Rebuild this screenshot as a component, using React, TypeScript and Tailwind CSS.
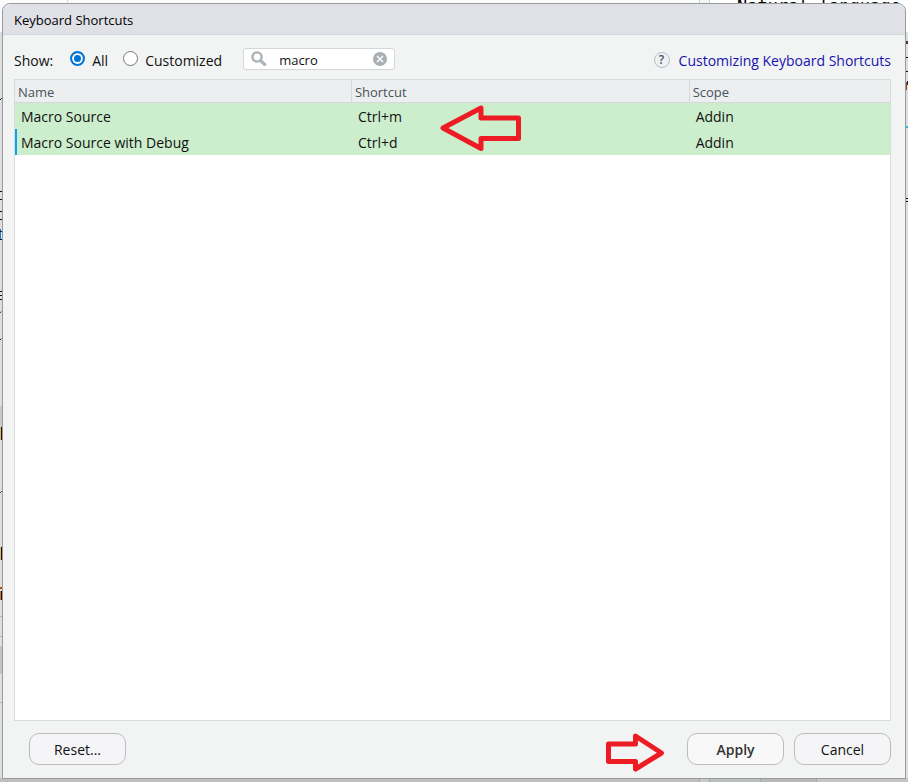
import { useState } from "react";

type Shortcut = {
  name: string;
  keys: string;
  scope: string;
};

type Mark = {
  x: number;
  y: number;
  w: number;
  h: number;
  fill: string;
};

const SHORTCUTS: Shortcut[] = [
  { name: "Macro Source", keys: "Ctrl+m", scope: "Addin" },
  { name: "Macro Source with Debug", keys: "Ctrl+d", scope: "Addin" },
];

// slivers of editor code that peek out beside the dialog
const LEFT_MARKS: Mark[] = [
  { x: 0, y: 99, w: 1, h: 1, fill: "#111" },
  { x: 1, y: 98, w: 1, h: 1, fill: "#432" },
  { x: 0, y: 191, w: 2, h: 1, fill: "#111" },
  { x: 0, y: 199, w: 2, h: 1, fill: "#111" },
  { x: 0, y: 211, w: 2, h: 1, fill: "#111" },
  { x: 0, y: 219, w: 2, h: 1, fill: "#111" },
  { x: 0, y: 229, w: 1, h: 10, fill: "#1b7fd8" },
  { x: 0, y: 231, w: 2, h: 1, fill: "#114" },
  { x: 0, y: 239, w: 2, h: 1, fill: "#114" },
  { x: 0, y: 291, w: 2, h: 1, fill: "#111" },
  { x: 0, y: 295, w: 2, h: 1, fill: "#111" },
  { x: 0, y: 299, w: 2, h: 1, fill: "#111" },
  { x: 0, y: 312, w: 1, h: 1, fill: "#537" },
  { x: 1, y: 311, w: 1, h: 1, fill: "#a84" },
  { x: 0, y: 339, w: 1, h: 1, fill: "#114" },
  { x: 1, y: 338, w: 1, h: 1, fill: "#a84" },
  { x: 0, y: 406, w: 2, h: 21, fill: "#c8c8c8" },
  { x: 0, y: 427, w: 2, h: 13, fill: "#e5b96b" },
  { x: 1, y: 427, w: 1, h: 13, fill: "#111" },
  { x: 0, y: 492, w: 1, h: 1, fill: "#537" },
  { x: 1, y: 491, w: 1, h: 1, fill: "#a45" },
  { x: 0, y: 547, w: 2, h: 13, fill: "#e5b96b" },
  { x: 1, y: 547, w: 1, h: 13, fill: "#111" },
  { x: 0, y: 587, w: 2, h: 2, fill: "#a50" },
  { x: 0, y: 591, w: 1, h: 9, fill: "#d97a1b" },
  { x: 1, y: 591, w: 1, h: 9, fill: "#111" },
  { x: 0, y: 616, w: 2, h: 1, fill: "#b5b5b5" },
  { x: 0, y: 636, w: 2, h: 1, fill: "#b5b5b5" },
  { x: 0, y: 646, w: 2, h: 28, fill: "#c4c4c4" },
  { x: 0, y: 702, w: 2, h: 1, fill: "#b5b5b5" },
];

const RIGHT_MARKS: Mark[] = [
  { x: 0, y: 41, w: 2, h: 3, fill: "#532" },
  { x: 0, y: 57, w: 2, h: 1, fill: "#111" },
  { x: 0, y: 71, w: 2, h: 1, fill: "#111" },
  { x: 0, y: 82, w: 1, h: 8, fill: "#a40" },
  { x: 1, y: 81, w: 1, h: 4, fill: "#225" },
  { x: 0, y: 126, w: 2, h: 2, fill: "#3ab0f0" },
  { x: 0, y: 198, w: 2, h: 1, fill: "#111" },
  { x: 0, y: 201, w: 2, h: 1, fill: "#111" },
];

function Marks({ marks, className }: { marks: Mark[]; className: string }) {
  return (
    <svg className={className} width="2" height="782" aria-hidden="true" shapeRendering="crispEdges">
      {marks.map((m) => (
        <rect key={`${m.x}-${m.y}`} x={m.x} y={m.y} width={m.w} height={m.h} fill={m.fill} />
      ))}
    </svg>
  );
}

function EditorBackdrop() {
  return (
    <div className="absolute inset-0 overflow-hidden bg-[#dedede]" aria-hidden="true">
      <div className="flex h-8 bg-[#fbfbfb]">
        <div className="w-[68px] border-r border-[#dcdee2]" />
        <div className="flex-1" />
        <div className="w-[11px] border-x border-[#cfd2d8] bg-[#f4f5f7]" />
        <div className="w-[198px] bg-white pl-[27px] font-['DejaVu_Sans_Mono',monospace] text-[17px] leading-3 whitespace-nowrap text-black">
          Natural language
        </div>
      </div>
      <Marks marks={LEFT_MARKS} className="absolute top-0 left-0" />
      <Marks marks={RIGHT_MARKS} className="absolute top-0 right-0" />
      <div className="absolute inset-x-0 bottom-0 flex h-1 bg-[#bfbfbf]">
        <div className="flex-1 border-r border-[#a5a5a5]" />
        <div className="w-[10px] border-r border-[#a5a5a5] bg-[#c8c8c8]" />
        <div className="w-[51px] border-r border-[#a5a5a5] bg-[#b9bfbf]" />
        <div className="w-[56px] border-r border-[#a5a5a5] bg-[#b8b8b8]" />
        <div className="w-[91px] bg-[#c4c4c4]" />
      </div>
    </div>
  );
}

function SearchIcon() {
  return (
    <svg width="16" height="16" viewBox="0 0 16 16" fill="none" stroke="#aab2b7" aria-hidden="true">
      <circle cx="6" cy="6" r="4.6" strokeWidth="2.4" />
      <path d="M9.6 9.6 14.6 14.4" strokeWidth="3.2" />
    </svg>
  );
}

function ClearIcon() {
  return (
    <svg width="14" height="14" viewBox="0 0 14 14" aria-hidden="true">
      <circle cx="7" cy="7" r="7" fill="#a9b0b5" />
      <path d="M4 4l6 6M10 4l-6 6" stroke="#fff" strokeWidth="1.5" />
    </svg>
  );
}

function HelpIcon() {
  return (
    <span className="mb-[2px] flex size-4 items-center justify-center rounded-full border border-[#b4c0c6] bg-[#eef1f3] text-[12px] leading-none font-semibold text-[#4c565c]">
      ?
    </span>
  );
}

function ArrowLeft() {
  return (
    <svg className="absolute top-0 left-[87px]" width="84" height="50" fill="none" aria-hidden="true">
      <path
        d="M4 25 42 5V15H79.500V35.500H42V45.500Z"
        stroke="#ed1c24"
        strokeWidth="5"
        strokeLinejoin="round"
      />
    </svg>
  );
}

function ArrowRight() {
  return (
    <svg width="60" height="40" fill="none" aria-hidden="true">
      <path
        d="M3.500 12H30.500V4L56.500 21 30.500 37V29.500H3.500Z"
        stroke="#ed1c24"
        strokeWidth="5"
        strokeLinejoin="round"
      />
    </svg>
  );
}

export default function App() {
  const [query, setQuery] = useState("macro");
  const [show, setShow] = useState("all");
  const [selected, setSelected] = useState(1);

  const rows = SHORTCUTS.filter((s) => s.name.toLowerCase().includes(query.toLowerCase()));

  return (
    <div className="relative flex min-h-screen flex-col px-[2px] pt-[3px] pb-[3px] font-['Open_Sans','Noto_Sans',sans-serif] text-sm text-[#111]">
      <EditorBackdrop />
      <div
        role="dialog"
        aria-labelledby="dialog-title"
        className="relative flex flex-1 flex-col rounded-t-lg border border-[#999c9f] bg-[#f2f4f3]"
      >
        <h1
          id="dialog-title"
          className="h-[31px] rounded-t-lg border-b border-[#d3d6da] bg-[#e0e1e6] pl-[11px] text-[13px] leading-8 text-black"
        >
          Keyboard Shortcuts
        </h1>

        <div className="flex h-11 items-center pt-2 pr-[14px] pl-[11px]">
          <span>Show:</span>
          <label className="ml-[17px] flex items-center gap-[7px]">
            <input
              type="radio"
              name="show"
              className="mb-[6px] size-[15px] appearance-none rounded-full border border-[#767676] bg-white checked:border-2 checked:border-[#0075d7] checked:bg-[#0075d7] checked:shadow-[inset_0_0_0_2px_#fff]"
              checked={show === "all"}
              onChange={() => setShow("all")}
            />
            All
          </label>
          <label className="ml-[15px] flex items-center gap-[7px]">
            <input
              type="radio"
              name="show"
              className="mb-[6px] size-[15px] appearance-none rounded-full border border-[#767676] bg-white checked:border-2 checked:border-[#0075d7] checked:bg-[#0075d7] checked:shadow-[inset_0_0_0_2px_#fff]"
              checked={show === "customized"}
              onChange={() => setShow("customized")}
            />
            Customized
          </label>
          <div className="mb-1 ml-[21px] flex h-[22px] w-[152px] items-center rounded-[3px] border border-[#d3d7da] bg-white px-[7px]">
            <SearchIcon />
            <input
              type="text"
              aria-label="Filter shortcuts"
              className="ml-3 w-0 flex-1 bg-transparent pt-[3px] text-[13px] outline-none"
              value={query}
              onChange={(e) => setQuery(e.target.value)}
            />
            <button type="button" aria-label="Clear" onClick={() => setQuery("")}>
              <ClearIcon />
            </button>
          </div>
          <a href="#help" className="ml-auto flex items-center gap-[9px] text-[#1612b0]">
            <HelpIcon />
            Customizing Keyboard Shortcuts
          </a>
        </div>

        <div className="mr-[14px] ml-[11px] flex-1 border border-[#d8dadc] bg-white">
          <table className="w-full table-fixed border-separate border-spacing-0 text-left">
            <colgroup>
              <col className="w-[38.500%]" />
              <col className="w-[38.600%]" />
              <col />
            </colgroup>
            <thead>
              <tr className="h-[23px] bg-[#edeef0] text-[13px] leading-5 text-[#4a5358]">
                <th className="border-r border-b border-[#d5d7da] px-[3px] pt-[2px] pb-0 font-normal">Name</th>
                <th className="border-r border-b border-[#d5d7da] px-[3px] pt-[2px] pb-0 font-normal">Shortcut</th>
                <th className="border-b border-[#d5d7da] px-[3px] pt-[2px] pb-0 font-normal">Scope</th>
              </tr>
            </thead>
            <tbody>
              {rows.map((row, i) => (
                <tr key={row.name} className="h-[26px] bg-[#cdeecd]" onClick={() => setSelected(i)}>
                  <td
                    className={
                      i === selected ? "border-l-2 border-[#08a5f5] pt-[2px] pl-1" : "pt-[2px] pl-[6px]"
                    }
                  >
                    {row.name}
                  </td>
                  <td className="relative pt-[2px] pl-[6px]">
                    {row.keys}
                    {i === 0 && <ArrowLeft />}
                  </td>
                  <td className="pt-[2px] pl-[6px]">{row.scope}</td>
                </tr>
              ))}
            </tbody>
          </table>
        </div>

        <div className="flex h-[57px] items-center gap-[10px] pr-[14px] pb-[2px] pl-[26px]">
          <button type="button" className="h-8 w-[97px] rounded-[10px] border border-[#bcbcbf] bg-[#f5f5f8] pt-[2px]">
            Reset...
          </button>
          <div className="mt-[6px] mr-3 ml-auto">
            <ArrowRight />
          </div>
          <button
            type="button"
            className="h-8 w-[97px] rounded-[10px] border border-[#bcbcbf] bg-[#f8f8f8] pt-[2px] font-semibold text-[#333]"
          >
            Apply
          </button>
          <button type="button" className="h-8 w-[97px] rounded-[10px] border border-[#bcbcbf] bg-[#f5f5f8] pt-[2px]">
            Cancel
          </button>
        </div>
      </div>
    </div>
  );
}
